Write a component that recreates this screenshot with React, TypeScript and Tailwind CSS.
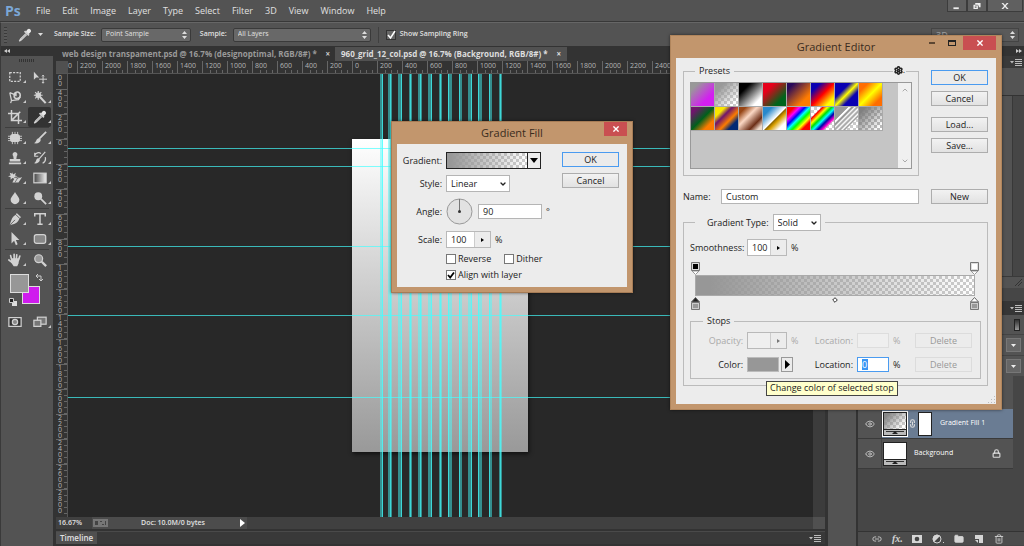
import type { ReactNode } from 'react';
import { clsx } from 'clsx';
import { ChevronDown, ChevronUp, Eye, Folder, Link2, Lock, Settings, Trash2 } from 'lucide-react';

const MENU = ['File', 'Edit', 'Image', 'Layer', 'Type', 'Select', 'Filter', '3D', 'View', 'Window', 'Help'];

const H_RULER = [
    2200, 2000, 1800, 1600, 1400, 1200, 1000, 800, 600, 400, 200, 0, 200, 400, 600, 800, 1000, 1200, 1400, 1600, 1800,
    2000, 2200, 2400,
];

const V_RULER = [400, 200, 0, 200, 400, 600, 800, 1000, 1200, 1400, 1600, 1800, 2000, 2200, 2400, 2600, 2800];

const H_GUIDES = [74, 92, 172, 241, 323];

// x and width of every guide pair, and where its bright line sits
const V_GUIDES = [
    [312, 3, 2], [320, 4, 2], [330, 4, 3], [341, 3, 1], [350, 4, 2], [360, 4, 3], [371, 3, 1],
    [380, 4, 0], [391, 3, 0], [400, 4, 3], [410, 4, 0], [421, 3, 0], [431, 3, 1],
];

const PRESETS = [
    'bg-[linear-gradient(135deg,#999_15%,#d31ff0_70%)]',
    'bg-[linear-gradient(135deg,#999_20%,#9990_85%),repeating-conic-gradient(#ccc_0_25%,#fff_0_50%)] bg-[length:100%_100%,6px_6px]',
    'bg-[linear-gradient(135deg,#000_25%,#fff_80%)]',
    'bg-[linear-gradient(135deg,#e6001a_25%,#00641b_75%)]',
    'bg-[linear-gradient(135deg,#29095a_15%,#ff7c00_75%)]',
    'bg-[linear-gradient(135deg,#0a00b2_20%,#f00_50%,#fffc00_82%)]',
    'bg-[linear-gradient(135deg,#0a00b2_32%,#fffc00_50%,#0a00b2_68%)]',
    'bg-[linear-gradient(135deg,#ff6e02_20%,#ff0_50%,#ff6d00_80%)]',
    'bg-[linear-gradient(135deg,#6f156c_15%,#00601b_50%,#fd7c00_78%)]',
    'bg-[linear-gradient(135deg,#f9e600_22%,#6f156c_38%,#fd7c00_60%,#002874_78%)]',
    'bg-[linear-gradient(135deg,#974616_15%,#fbd8c5_40%,#6c2e16_72%,#efdbcd_90%)]',
    'bg-[linear-gradient(135deg,#2989cc_20%,#fff_50%,#906a00_54%,#d99f00_62%,#fff_82%)]',
    'bg-[linear-gradient(135deg,#f00_16%,#f0f_28%,#00f_40%,#0ff_50%,#0f0_60%,#ff0_72%,#f00_82%)]',
    'bg-[linear-gradient(135deg,#f000_22%,#f00_26%,#ff0_36%,#0d0_45%,#0ff_54%,#00a_64%,#f0c_74%,#f000_80%),repeating-conic-gradient(#ccc_0_25%,#fff_0_50%)] bg-[length:100%_100%,6px_6px]',
    'bg-[linear-gradient(135deg,#999_28%,#fff_30%,#fff_34%,#999_36%,#999_40%,#fff_43%,#999_49%,#fff_54%,#999_60%,#fff_65%,#999_70%,#9990_74%),repeating-conic-gradient(#ccc_0_25%,#fff_0_50%)] bg-[length:100%_100%,6px_6px]',
    'bg-[linear-gradient(135deg,#808080_15%,#8080_90%),repeating-conic-gradient(#bbb_0_25%,#fff_0_50%)] bg-[length:100%_100%,6px_6px]',
];

function Tool({ name, active, plain, children }: { name: string; active?: boolean; plain?: boolean; children: ReactNode }) {
    return (
        <button
            aria-label={name}
            className={clsx('relative flex h-5 w-[23px] items-center justify-center rounded-xs', active && 'bg-[#333]')}
        >
            <svg viewBox="0 0 16 16" className="size-[14px] fill-none stroke-[#d2d2d2] stroke-[1.4]">{children}</svg>
            {!plain && (
                <svg viewBox="0 0 3 3" className="absolute right-0 bottom-1 size-[3px] fill-[#c8c8c8]"><path d="M3 0v3H0z" /></svg>
            )}
        </button>
    );
}

function ToolRow({ children }: { children: ReactNode }) {
    return <div className="flex gap-[2px] pl-[2px]">{children}</div>;
}

function ToolBox() {
    return (
        <aside className="flex w-[53px] shrink-0 flex-col border-l border-[#3a3a3a] bg-[#535353]">
            <div className="flex h-[10px] items-center bg-[#333] pl-[3px]">
                <svg viewBox="0 0 6 4" className="h-1 w-[6px] fill-[#ccc]"><path d="M3 0v4L0 2zM6 0v4L3 2z" /></svg>
            </div>
            <div className="mx-auto mt-[3px] mb-[5px] h-[3px] w-4 bg-[repeating-linear-gradient(90deg,#333_0_1px,#535353_1px_2px)]" />
            <ToolRow>
                <Tool name="Marquee"><rect x="2" y="3" width="12" height="10" strokeDasharray="2.4 1.4" /></Tool>
                <Tool name="Move" plain>
                    <path d="M1 2v9l2.500-2.500H7z" className="fill-[#d2d2d2] stroke-none" />
                    <path d="M11.500 6v9M7 10.500h9M10.300 7.200l1.200-1.300 1.200 1.300M10.300 13.800l1.200 1.300 1.200-1.300" strokeWidth="1.100" />
                </Tool>
            </ToolRow>
            <ToolRow>
                <Tool name="Lasso">
                    <path d="M2 3l2 9 8-1 2-3M2 3l5 2M4 12l-1 3" />
                    <path d="M7 7c0-6 7-6 7-1s-7 5-7 1M9 3v4" strokeWidth="1.800" />
                </Tool>
                <Tool name="Magic Wand">
                    <path d="M8 8l6.500 7" strokeWidth="2.400" />
                    <path d="M6 1v10M1 6h10M2.500 2.500l7 7M9.500 2.500l-7 7" />
                    <circle cx="6" cy="6" r="2.500" className="fill-[#d2d2d2]" />
                </Tool>
            </ToolRow>
            <ToolRow>
                <Tool name="Crop"><path d="M4 0v12h12M0 4h12v12M14 2L5 11" strokeWidth="1.700" /></Tool>
                <Tool name="Eyedropper" active><EyedropperPath /></Tool>
            </ToolRow>
            <div className="mx-1 border-t border-[#3e3e3e]" />
            <ToolRow>
                <Tool name="Healing Brush">
                    <rect x="3" y="4" width="10" height="8" rx="3" className="fill-[#d2d2d2]" />
                    <path d="M5 1v14M8 1v14M11 1v14M0 6h16M0 8.500h16M0 11h16" strokeWidth="1" />
                </Tool>
                <Tool name="Brush">
                    <path d="M15 1L7 9" strokeWidth="2" />
                    <path d="M7 8l2 2c-1 4-4 4.500-8 4 3-1 2-5 6-6z" className="fill-[#d2d2d2] stroke-none" />
                </Tool>
            </ToolRow>
            <ToolRow>
                <Tool name="Clone Stamp">
                    <path d="M8 1a3 3 0 0 1 2 5l-.500 3H14v3H2V9h4.500L6 6a3 3 0 0 1 2-5zM1 13h14v2H1z" className="fill-[#d2d2d2] stroke-none" />
                </Tool>
                <Tool name="History Brush">
                    <path d="M14 1L7 9M2 5c1-3 5-4 7-2M2 2v4h4M14 7c1 4-1 6-3 7" />
                    <path d="M6 8l2 2c-1 4-4 4.500-7 4 3-1 2-5 5-6z" className="fill-[#d2d2d2] stroke-none" />
                </Tool>
            </ToolRow>
            <ToolRow>
                <Tool name="Eraser">
                    <path d="M8 7h8l-4 6H5zM5 1l1 3 3-2-1 3 3 1-4 1 1 2-3-1-2 2V7L0 6l3-1-1-3 3 1z" className="fill-[#d2d2d2] stroke-none" />
                    <path d="M8 7l3 1-3 5M11 8l4-1" stroke="#535353" strokeWidth=".8" />
                </Tool>
                <Tool name="Gradient">
                    <defs>
                        <linearGradient id="toolGradient"><stop stopColor="#444" /><stop offset="1" stopColor="#eee" /></linearGradient>
                    </defs>
                    <rect x="1" y="2.500" width="14" height="11" fill="url(#toolGradient)" />
                </Tool>
            </ToolRow>
            <ToolRow>
                <Tool name="Blur"><path d="M8 1c2 4 5 6 5 9a5 5 0 0 1-10 0c0-3 3-5 5-9z" className="fill-[#d2d2d2] stroke-none" /></Tool>
                <Tool name="Dodge">
                    <circle cx="6" cy="6" r="4.500" className="fill-[#d2d2d2] stroke-none" />
                    <path d="M9 9l6 6" strokeWidth="2" />
                </Tool>
            </ToolRow>
            <div className="mx-1 border-t border-[#3e3e3e]" />
            <ToolRow>
                <Tool name="Pen">
                    <path d="M10 1l5 5-2 1c-1 4-3 6-11 8C4 8 5 5 9 3z" className="fill-[#d2d2d2] stroke-none" />
                    <path d="M2 15l6-6M9 3l4 4" stroke="#535353" strokeWidth="1" />
                </Tool>
                <Tool name="Type"><path d="M2 5V2h12v3M8 2v12M5 14h6" strokeWidth="1.700" /></Tool>
            </ToolRow>
            <ToolRow>
                <Tool name="Path Selection"><path d="M4 0v13l3-3 2 5 2-1-2-5h4z" className="fill-[#d2d2d2] stroke-none" /></Tool>
                <Tool name="Rounded Rectangle"><rect x="1.500" y="3" width="13" height="10" rx="2.500" className="fill-[#888]" /></Tool>
            </ToolRow>
            <div className="mx-1 border-t border-[#3e3e3e]" />
            <ToolRow>
                <Tool name="Hand">
                    <path d="M4 7L3 3M7 7V1.500M9.500 7l.500-5M12 8l1.500-4.500M5 11L1 8" strokeWidth="1.900" strokeLinecap="round" />
                    <path d="M4 6h9l-1 6-1.500 3H6.500L3 10z" className="fill-[#d2d2d2] stroke-none" />
                </Tool>
                <Tool name="Zoom" plain>
                    <circle cx="6.500" cy="6.500" r="4.500" className="fill-[#999]" />
                    <path d="M10 10l5 5" strokeWidth="2.600" />
                </Tool>
            </ToolRow>
            <div className="relative ml-2 mt-1 h-[38px] w-[34px]">
                <button aria-label="Background color" className="absolute top-3 left-[13px] size-[18px] border border-[#ddd] bg-[#cf1bee]" />
                <button aria-label="Foreground color" className="absolute top-0 left-[1px] size-[19px] border border-[#ddd] bg-[#979797]" />
                <svg viewBox="0 0 8 8" className="absolute top-0 right-0 size-2 fill-none stroke-[#ccc]"><path d="M3 0L1 2l2 2M1 2h5v5M4 5l2 2 2-2" /></svg>
                <svg viewBox="0 0 8 8" className="absolute top-6 left-0 size-2"><path d="M3 3h5v5H3z" fill="#ddd" /><path d="M.5.5h4v4h-4z" fill="#222" stroke="#ccc" /></svg>
            </div>
            <ToolRow>
                <Tool name="Quick Mask" plain>
                    <rect x="1" y="3" width="14" height="10" className="fill-[#333]" />
                    <circle cx="8" cy="8" r="3" className="fill-[#888]" />
                </Tool>
                <Tool name="Screen Mode">
                    <rect x="5" y="2.500" width="10" height="8" className="fill-[#777]" />
                    <rect x="1" y="6" width="8" height="7" className="fill-[#777]" />
                </Tool>
            </ToolRow>
        </aside>
    );
}

function EyedropperPath() {
    return (
        <>
            <path d="M11 1.500c2-2 5 1 3.500 3.200L12 7 9 4z" className="fill-[#e8e8e8] stroke-none" />
            <path d="M7.500 3.500l5 5" strokeWidth="2" />
            <path d="M9 6.500l-6 6L1.500 15 4 13.500l6-6" />
        </>
    );
}

function UpDown() {
    return (
        <svg viewBox="0 0 5 8" className="pointer-events-none absolute top-[3px] right-1 h-2 w-[5px] fill-[#ddd]">
            <path d="M2.500 0L5 3H0zM2.500 8L5 5H0z" />
        </svg>
    );
}

function MenuGlyph() {
    return (
        <svg viewBox="0 0 12 8" className="h-2 w-3 fill-[#bbb]">
            <path d="M0 3h4L2 5.500zM5 1h7v1H5zM5 3h7v1H5zM5 5h7v1H5zM5 7h7v1H5z" />
        </svg>
    );
}

function TopBars() {
    return (
        <>
            <header className="flex h-[22px] shrink-0 items-center border-b border-[#383838] text-[9px]">
                <span className="w-9 pl-[5px] text-[14px] font-bold text-[#7ba7d7]">Ps</span>
                <nav className="flex gap-3">
                    {MENU.map((m) => <button key={m}>{m}</button>)}
                </nav>
                <div className="ml-auto flex self-start pr-[1px]">
                    {['M1 6h6v2H1z', 'M3 1h6v5H7V4H3zM1 3h5v5H1zm1.500 2v1.500h2V5z', 'M1 1h2l2 2.500L7 1h2L6 4.500 9 8H7L5 5.500 3 8H1l3-3.500z'].map((d, i) => (
                        <button
                            key={d}
                            aria-label={['Minimize', 'Restore', 'Close'][i]}
                            className={clsx('flex h-3 items-center justify-center border border-t-0 border-[#3c3c3c] bg-[#606060]', i === 2 ? 'w-9' : 'w-5')}
                        >
                            <svg viewBox="0 0 10 9" className="h-2 w-[10px] fill-[#eee]" fillRule="evenodd"><path d={d} /></svg>
                        </button>
                    ))}
                </div>
            </header>
            <div className="flex h-6 shrink-0 items-center border-t border-l border-[#666] border-l-[#3a3a3a] text-[7px] font-semibold">
                <div className="ml-[3px] h-4 w-[3px] bg-[repeating-linear-gradient(#3a3a3a_0_1px,#5a5a5a_1px_3px)]" />
                <button aria-label="Current tool" className="ml-[11px] flex items-center gap-[6px]">
                    <svg viewBox="0 0 16 16" className="size-[14px] fill-none stroke-[#d2d2d2] stroke-[1.4]"><EyedropperPath /></svg>
                    <svg viewBox="0 0 5 3" className="h-[3px] w-[5px] fill-[#ddd]"><path d="M0 0h5L2.500 3z" /></svg>
                </button>
                <label htmlFor="size" className="ml-[11px]">Sample Size:</label>
                <div className="relative ml-[5px]">
                    <select id="size" className="h-[14px] w-[90px] appearance-none rounded-xs border border-[#3a3a3a] bg-[#686868] pl-1 font-medium">
                        <option>Point Sample</option>
                    </select>
                    <UpDown />
                </div>
                <label htmlFor="sample" className="ml-[9px]">Sample:</label>
                <div className="relative ml-[6px]">
                    <select id="sample" className="h-[14px] w-[138px] appearance-none rounded-xs border border-[#3a3a3a] bg-[#686868] pl-1 font-medium">
                        <option>All Layers</option>
                    </select>
                    <UpDown />
                </div>
                <div className="mx-[7px] h-4 border-l border-[#404040]" />
                <label className="flex items-center gap-1">
                    <span className="relative flex">
                        <input type="checkbox" defaultChecked className="size-[10px] appearance-none border border-[#333] bg-[#666]" />
                        <svg viewBox="0 0 10 10" className="pointer-events-none absolute inset-0 fill-none stroke-white stroke-[1.5]"><path d="M2 5l2.500 3L9 1" /></svg>
                    </span>
                    Show Sampling Ring
                </label>
                <div className="relative mr-[5px] ml-auto">
                    <select aria-label="Workspace" className="h-[14px] w-[88px] appearance-none border border-[#444] bg-[#5a5a5a] pl-1 text-[9px] leading-3 text-[#999]">
                        <option>3D</option>
                    </select>
                    <UpDown />
                </div>
            </div>
        </>
    );
}

function Canvas() {
    return (
        <div className="relative min-w-0 flex-1 overflow-hidden bg-[#282828]">
            <div className="absolute top-[65px] left-[284px] h-[313px] w-44 bg-linear-to-b from-white to-[#999] shadow-[1px_2px_4px_#111]" />
            <svg className="absolute inset-0 h-full w-full" shapeRendering="crispEdges">
                {H_GUIDES.map((y) => <rect key={y} x="0" y={y} width="100%" height="1" fill="#4ff" fillOpacity=".68" />)}
                {V_GUIDES.map(([x, w, bright]) => (
                    <g key={x} fill="#4ff">
                        <rect x={x} y="0" width={w} height="100%" fillOpacity=".48" />
                        <rect x={x + bright} y="0" width="1" height="100%" fillOpacity=".65" />
                    </g>
                ))}
            </svg>
        </div>
    );
}

function Workspace() {
    return (
        <main className="ml-[3px] flex min-w-0 flex-1 flex-col bg-[#333]">
            <div className="flex h-[15px] shrink-0 items-end text-[8px] leading-[14px] font-bold text-[#999]">
                <div className="flex h-[14px] w-[279px] shrink-0 items-center justify-between pr-[5px] pl-[6px] whitespace-nowrap">
                    web design transpament.psd @ 16.7% (designoptimal, RGB/8#) *
                    <button aria-label="Close tab" className="text-[#ccc]">×</button>
                </div>
                <div className="flex h-[14px] w-[232px] shrink-0 items-center justify-between bg-[#515151] px-[6px] whitespace-nowrap text-[#ddd]">
                    960_grid_12_col.psd @ 16.7% (Background, RGB/8#) *
                    <button aria-label="Close tab">×</button>
                </div>
            </div>
            <div className="flex h-[13px] shrink-0 overflow-hidden border-b border-[#555] bg-[#333] text-[7px] leading-[9px] text-[#b5b5b5]">
                <div className="w-3 shrink-0 bg-[#505050]" />
                <div className="w-[9px] shrink-0">0</div>
                {H_RULER.map((n, i) => (
                    <div key={i} className="flex w-[25px] shrink-0 flex-col border-l border-[#666] pl-[2px]">
                        {n}
                        <div className="mt-auto h-[3px] bg-[repeating-linear-gradient(90deg,#333_0_5px,#666_5px_6px)]" />
                    </div>
                ))}
            </div>
            <div className="flex min-h-0 flex-1">
                <div className="w-3 shrink-0 overflow-hidden border-r border-[#555] text-[7px] leading-[6px] text-[#b5b5b5]">
                    <div className="h-[15px] pt-[1px] pl-[2px]"><span className="block w-1 break-all">00</span></div>
                    {/* the narrow box breaks after every digit, so the number reads downwards */}
                    {V_RULER.map((n, i) => (
                        <div key={i} className="flex h-[25px] border-t border-[#666] pl-[2px]">
                            <span className="w-1 break-all">{n}</span>
                            <div className="ml-auto w-[3px] bg-[repeating-linear-gradient(#333_0_5px,#666_5px_6px)]" />
                        </div>
                    ))}
                </div>
                <Canvas />
                <div className="w-3 shrink-0 bg-[#3c3c3c]" />
            </div>
            <div className="flex h-3 shrink-0 items-center bg-[#404040] text-[7px] leading-3 font-semibold">
                <span className="w-9 pl-[2px]">16.67%</span>
                <div className="flex h-full w-[155px] items-center bg-[#4c4c4c] pr-[2px]">
                    <svg viewBox="0 0 15 8" className="mr-[33px] ml-[1px] h-2 w-[15px]">
                        <path d="M0 0h15v8H0z" fill="#777" />
                        <path d="M2 2h3v4H2zM7 2h2v1H7zM9 5h2v1H9zM12 2h1v4h-1z" fill="#444" />
                    </svg>
                    Doc: 10.0M/0 bytes
                    <svg viewBox="0 0 5 8" className="ml-auto h-2 w-[5px] fill-white"><path d="M0 0l5 4-5 4z" /></svg>
                </div>
                <div className="ml-auto h-full w-3 bg-[#505050]" />
            </div>
            <div className="mt-[2px] mb-[2px] flex h-[13px] shrink-0 items-center justify-between border-t border-[#4a4a4a] bg-[#393939] pr-1">
                <button className="h-full w-[41px] bg-[#505050] text-[8px] leading-3 font-semibold">Timeline</button>
                <MenuGlyph />
            </div>
        </main>
    );
}

function Thumb({ gradient }: { gradient?: boolean }) {
    return (
        <div className="flex h-6 w-6 flex-col border border-[#222] bg-[#bbb]">
            <div
                className={clsx(
                    'h-[17px] border-b border-[#222]',
                    gradient
                        ? 'bg-[linear-gradient(135deg,#888_15%,#8880_85%),repeating-conic-gradient(#ccc_0_25%,#fff_0_50%)] bg-[length:100%_100%,6px_6px]'
                        : 'bg-white',
                )}
            />
            <svg viewBox="0 0 22 5" className="h-[5px] w-full"><path d="M2 1.500h18" stroke="#333" /><path d="M11 1l3 3H8z" fill="#222" /></svg>
        </div>
    );
}

function DropButton({ label }: { label: string }) {
    return (
        <div className="flex h-[21px] items-center justify-end border-t border-[#444] pr-[3px]">
            <button aria-label={label} className="flex h-[14px] w-[15px] items-center justify-center border border-[#777] bg-[#666]">
                <svg viewBox="0 0 5 3" className="h-[3px] w-[5px] fill-[#eee]"><path d="M0 0h5L2.500 3z" /></svg>
            </button>
        </div>
    );
}

function RightPanels() {
    return (
        <aside className="flex w-[199px] shrink-0 bg-[#333]">
            <div className="mr-[2px] ml-[3px] flex w-7 flex-col bg-[#535353]"><div className="h-[10px] bg-[#333]" /></div>
            <div className="flex min-w-0 flex-1 flex-col bg-[#464646]">
                <div className="flex h-[10px] items-center justify-end bg-[#333] pr-[2px]">
                    <svg viewBox="0 0 6 4" className="h-1 w-[6px] fill-[#ccc]"><path d="M0 0v4l3-2zM3 0v4l3-2z" /></svg>
                </div>
                <div className="flex h-3 items-center justify-end bg-[#3a3a3a] pr-[2px]"><MenuGlyph /></div>
                <div className="h-7 border-b border-[#333] bg-[#535353]" />
                <div className="mr-[11px] h-[180px] border-r border-[#383838] bg-[#535353]" />
                <div className="flex h-3 items-end justify-end border-t border-[#3a3a3a] bg-[#535353] p-[2px]">
                    <svg viewBox="0 0 7 7" className="size-[7px] fill-none stroke-[#333]"><path d="M7 0L0 7M7 3L3 7" /></svg>
                </div>
                <div className="mt-[13px] flex h-[14px] shrink-0 items-center justify-end bg-[#363636] pr-[2px]"><MenuGlyph /></div>
                <div className="flex h-[19px] items-center justify-end bg-[#535353] pr-[4px]">
                    <span className="h-3 w-[6px] border border-[#222] bg-linear-to-b from-[#333] to-[#999]" />
                </div>
                <div className="bg-[#535353]"><DropButton label="Opacity" /><DropButton label="Fill" /></div>
                <div className="mr-[11px] h-[33px] bg-[#535353]" />
                <ul className="mr-[11px] text-[7px] font-medium text-white">
                    <li className="flex h-[30px] items-center border-b border-[#3a3a3a] bg-[#6a7c93]">
                        <div className="flex h-full w-6 items-center justify-center border-r border-[#444] bg-[#535353]"><Eye size={10} className="text-[#ccc]" /></div>
                        <div className="ml-[1px] flex items-center gap-[1px]">
                            <div className="outline outline-white"><Thumb gradient /></div>
                            <Link2 size={9} strokeWidth={3} className="rotate-90 text-[#ddd]" />
                            <div className="h-6 w-[14px] border border-[#222] bg-white" />
                        </div>
                        <span className="ml-2">Gradient Fill 1</span>
                    </li>
                    <li className="flex h-[30px] items-center border-b border-[#3a3a3a] bg-[#535353] pr-3">
                        <div className="flex h-full w-6 items-center justify-center border-r border-[#444]"><Eye size={10} className="text-[#ccc]" /></div>
                        <div className="ml-[1px]"><Thumb /></div>
                        <span className="ml-[7px]">Background</span>
                        <Lock size={9} strokeWidth={3} className="ml-auto text-[#ddd]" />
                    </li>
                </ul>
                <div className="mt-auto mb-[1px] flex h-[14px] shrink-0 items-center gap-[10px] border-t border-[#333] bg-[#4c4c4c] pl-[14px] text-[#d5d5d5]">
                    <Link2 size={10} />
                    <span className="w-[10px] font-['Liberation_Serif',serif] text-[10px] leading-3 font-bold italic">fx.</span>
                    <svg viewBox="0 0 10 10" className="size-[10px]"><path d="M0 1h10v8H0z" fill="#d5d5d5" /><circle cx="5" cy="5" r="2.300" fill="#444" /></svg>
                    <svg viewBox="0 0 12 10" className="h-[10px] w-3"><circle cx="5" cy="5" r="4" fill="#444" stroke="#d5d5d5" /><path d="M2 8A4 4 0 0 1 8 2zM11 8h1v1h-1z" fill="#d5d5d5" /></svg>
                    <Folder size={10} fill="currentColor" />
                    <svg viewBox="0 0 10 10" className="size-[10px] fill-[#d5d5d5]"><path d="M1 1h8v8H5V5H1z" /><path d="M1 6l3 3V6z" /></svg>
                    <Trash2 size={10} />
                </div>
            </div>
        </aside>
    );
}

function DialogButton({ children, primary, disabled, className }: { children: ReactNode; primary?: boolean; disabled?: boolean; className?: string }) {
    return (
        <button
            disabled={disabled}
            className={clsx(
                'flex h-[15px] w-[57px] shrink-0 items-center justify-center border',
                primary && 'border-[#4a9bf0] bg-[#ebebeb]',
                disabled && 'border-[#dcdcdc] text-[#999]',
                !primary && !disabled && 'border-[#adadad] bg-linear-to-b from-[#f2f2f2] to-[#e2e2e2]',
                className,
            )}
        >
            {children}
        </button>
    );
}

// text box with a small slider arrow at its right
function Stepper({ id, value, narrow, disabled }: { id: string; value: string; narrow?: boolean; disabled?: boolean }) {
    return (
        <div className={clsx('flex h-[17px] shrink-0 border border-[#b9b9b9]', narrow ? 'w-[40px]' : 'w-[45px]')}>
            <input id={id} defaultValue={value} disabled={disabled} className={clsx('min-w-0 flex-1 pl-1', disabled ? 'bg-[#efefef]' : 'bg-white')} />
            <button aria-label="Open slider" disabled={disabled} className="flex w-4 items-center justify-center border-l border-[#ccc] bg-[#ececec]">
                <svg viewBox="0 0 3 4" className={clsx('h-1 w-[3px]', disabled ? 'fill-[#777]' : 'fill-black')}><path d="M0 0l3 2-3 2z" /></svg>
            </button>
        </div>
    );
}

function Dropdown({ id, value, className }: { id: string; value: string; className: string }) {
    return (
        <div className="relative shrink-0">
            <select id={id} className={clsx('block h-[17px] appearance-none border border-[#b5b5b5] bg-white pl-1', className)}>
                <option>{value}</option>
            </select>
            <ChevronDown size={8} strokeWidth={4} className="pointer-events-none absolute top-[5px] right-[3px]" />
        </div>
    );
}

function Check({ label, checked }: { label: string; checked?: boolean }) {
    return (
        <label className="flex h-[10px] items-center gap-[2px]">
            <span className="relative flex">
                <input type="checkbox" defaultChecked={checked} className="size-[10px] appearance-none border border-[#777] bg-white" />
                {checked && (
                    <svg viewBox="0 0 10 10" className="pointer-events-none absolute inset-0 fill-none stroke-black stroke-[1.8]"><path d="M2 5l2.200 2.500L8 2.500" /></svg>
                )}
            </span>
            {label}
        </label>
    );
}

function CloseButton({ className }: { className: string }) {
    return (
        <button aria-label="Close" className={clsx('flex h-[14px] items-center justify-center bg-[#c94f51]', className)}>
            <svg viewBox="0 0 7 7" className="size-[6px] stroke-white stroke-[1.6]"><path d="M.5.5l6 6M6.500.5l-6 6" /></svg>
        </button>
    );
}

function GradientFillDialog() {
    return (
        <section className="absolute top-[121px] left-[391px] w-[242px] border border-[#a67c56] bg-[#c2966d] px-[5px] pb-[5px] text-[9px] leading-3 text-[#222] shadow-[0_0_3px_#0008]">
            <div className="relative flex h-[22px] items-center justify-center">
                <h2 className="text-[11px] text-[#3a2c20]">Gradient Fill</h2>
                <CloseButton className="absolute top-0 right-0 w-[23px]" />
            </div>
            <div className="flex justify-between bg-[#ececec] pt-2 pr-2 pb-[7px]">
                <div className="flex flex-col gap-[6px]">
                    <div className="flex items-center gap-1">
                        <span className="w-[45px] text-right">Gradient:</span>
                        <button aria-label="Edit gradient" className="flex h-[17px] w-[95px] border border-[#222]">
                            <span className="h-full flex-1 bg-[linear-gradient(90deg,#989898_5%,#9990),repeating-conic-gradient(#ccc_0_25%,#fff_0_50%)] bg-[length:100%_100%,6px_6px]" />
                            <span className="flex h-full w-[13px] items-center justify-center border-l border-[#222]">
                                <svg viewBox="0 0 8 5" className="h-[5px] w-2 fill-black"><path d="M0 0h8L4 5z" /></svg>
                            </span>
                        </button>
                    </div>
                    <div className="flex items-center gap-1">
                        <label htmlFor="style" className="w-[45px] text-right">Style:</label>
                        <Dropdown id="style" value="Linear" className="w-[64px]" />
                    </div>
                    <div className="flex items-center gap-1">
                        <label htmlFor="angle" className="w-[45px] text-right">Angle:</label>
                        <svg viewBox="0 0 27 27" className="mr-[1px] size-[27px]">
                            <circle cx="13.500" cy="13.500" r="12.500" fill="#e2e2e2" stroke="#999" />
                            <path d="M13.500 13.500V1" stroke="#777" /><circle cx="13.500" cy="13.500" r="1.500" fill="#333" />
                        </svg>
                        <input id="angle" defaultValue="90" className="h-[15px] w-16 border border-[#b5b5b5] bg-white pl-1" />
                        <span>°</span>
                    </div>
                    <div className="flex items-center gap-1">
                        <label htmlFor="scale" className="w-[45px] text-right">Scale:</label>
                        <Stepper id="scale" value="100" />
                        <span>%</span>
                    </div>
                    <div className="flex gap-[13px] pl-[49px]"><Check label="Reverse" /><Check label="Dither" /></div>
                    <div className="pl-[49px]"><Check label="Align with layer" checked /></div>
                </div>
                <div className="flex flex-col gap-[6px]">
                    <DialogButton primary>OK</DialogButton>
                    <DialogButton>Cancel</DialogButton>
                </div>
            </div>
        </section>
    );
}

function StopHandle({ fill, up, selected }: { fill: string; up?: boolean; selected?: boolean }) {
    return up ? (
        <svg viewBox="0 0 9 13" className="h-[13px] w-[9px]">
            <path d="M.5 5L4.500.5 8.500 5z" fill={selected ? '#222' : '#fff'} stroke="#666" />
            <path d="M.5 5.500h8v7h-8z" fill="#ccc" stroke="#777" /><path d="M2 7h5v4H2z" fill={fill} />
        </svg>
    ) : (
        <svg viewBox="0 0 9 13" className="h-[13px] w-[9px]">
            <path d="M1 9h7l-3.500 3.500z" fill="#fff" stroke="#999" />
            <path d="M.5.5h8v8h-8z" fill="#ddd" stroke="#777" /><path d="M2 2h5v5H2z" fill={fill} />
        </svg>
    );
}

function GradientEditorDialog() {
    return (
        <section className="absolute top-[35px] left-[670px] w-[332px] border border-[#b0855c] bg-[#c2966d] px-[5px] pb-[5px] text-[9px] leading-3 text-[#222] shadow-[0_0_3px_#0008]">
            <div className="relative flex h-[22px] items-center justify-center">
                <h2 className="text-[11px] text-[#3a2c20]">Gradient Editor</h2>
                <div className="absolute top-0 right-0 flex items-center">
                    <button aria-label="Minimize" className="mr-[13px] h-[2px] w-[6px] bg-[#5c4632]" />
                    <button aria-label="Maximize" className="mr-[7px] h-[6px] w-2 border border-t-2 border-[#222]" />
                    <CloseButton className="w-[33px]" />
                </div>
            </div>
            <div className="relative bg-[#ececec] pt-[7px] pr-2 pb-[18px] pl-[7px]">
                <div className="flex gap-3">
                    <fieldset className="relative min-w-0 flex-1 border border-[#bbb] px-[6px] pb-[6px]">
                        <legend className="ml-[5px] px-1">Presets</legend>
                        <button aria-label="Preset options" className="absolute -top-[13px] right-3 flex items-center bg-[#ececec] px-[1px]">
                            <Settings size={9} strokeWidth={4} />.
                        </button>
                        <div className="mt-[5px] flex h-[87px] border border-[#999] bg-[#c5c5c5]">
                            <div className="grid grid-cols-8 content-start">
                                {PRESETS.map((p, i) => (
                                    <button key={p} aria-label={`Preset ${i + 1}`} className={clsx('size-6 border-r border-b border-[#aaa]', p)} />
                                ))}
                            </div>
                            <div className="ml-auto flex w-[13px] flex-col items-center justify-between bg-[#f0f0f0] py-[3px] text-[#aaa]">
                                <ChevronUp size={8} strokeWidth={3} />
                                <ChevronDown size={8} strokeWidth={3} />
                            </div>
                        </div>
                    </fieldset>
                    <div className="flex flex-col gap-[6px] pt-[5px]">
                        <DialogButton primary>OK</DialogButton>
                        <DialogButton className="mb-[5px]">Cancel</DialogButton>
                        <DialogButton>Load...</DialogButton>
                        <DialogButton>Save...</DialogButton>
                    </div>
                </div>
                <div className="mt-[13px] flex items-center">
                    <label htmlFor="name" className="w-[38px]">Name:</label>
                    <input id="name" defaultValue="Custom" className="mr-3 h-[15px] min-w-0 flex-1 border border-[#b5b5b5] bg-white pl-1" />
                    <DialogButton>New</DialogButton>
                </div>
                <fieldset className="mt-[10px] min-w-0 border border-[#bbb] px-[6px] pb-[6px]">
                    <legend className="ml-[5px] flex items-center gap-1 pr-1 pl-3">
                        <label htmlFor="type">Gradient Type:</label>
                        <Dropdown id="type" value="Solid" className="w-12" />
                    </legend>
                    <div className="mt-2 flex items-center gap-1">
                        <label htmlFor="smooth" className="w-[53px] text-right">Smoothness:</label>
                        <Stepper id="smooth" value="100" narrow />
                        <span>%</span>
                    </div>
                    <div className="mt-[6px] flex justify-between pr-[2px] pl-[1px]"><StopHandle fill="#000" /><StopHandle fill="#fff" /></div>
                    <div className="mr-[6px] ml-[5px] h-[21px] border border-[#aaa] bg-[linear-gradient(90deg,#979797_5%,#9990),repeating-conic-gradient(#ccc_0_25%,#fff_0_50%)] bg-[length:100%_100%,6px_6px]" />
                    <div className="mt-[1px] flex justify-between pr-[2px] pl-[1px]">
                        <StopHandle fill="#999" up selected />
                        <svg viewBox="0 0 6 6" className="size-[6px] fill-white stroke-[#333]"><path d="M3 .7L5.300 3 3 5.300.7 3z" /></svg>
                        <StopHandle fill="#999" up />
                    </div>
                    <fieldset className="mt-[5px] min-w-0 border border-[#bbb] pr-2 pb-[6px]">
                        <legend className="ml-3 px-1">Stops</legend>
                        <div className="mt-[5px] flex items-center gap-1 text-[#aaa]">
                            <label htmlFor="opacity" className="w-[52px] text-right">Opacity:</label>
                            <Stepper id="opacity" value="" narrow disabled />
                            <span className="w-[10px]">%</span>
                            <label htmlFor="opacityLocation" className="w-12 text-right">Location:</label>
                            <input id="opacityLocation" disabled className="h-[15px] w-8 border border-[#ddd] bg-[#efefef]" />
                            <span>%</span>
                            <DialogButton disabled className="ml-auto">Delete</DialogButton>
                        </div>
                        <div className="mt-2 flex items-center gap-1">
                            <span className="w-[52px] text-right">Color:</span>
                            <div className="flex w-[46px] items-center gap-[2px]">
                                <button aria-label="Stop color" className="h-[15px] w-8 shrink-0 border border-[#bbb] bg-[#979797]" />
                                <button aria-label="Stop color source" className="flex h-[15px] w-3 shrink-0 items-center justify-center border border-[#999]">
                                    <svg viewBox="0 0 5 9" className="h-[9px] w-[5px] fill-black"><path d="M0 0l5 4.500L0 9z" /></svg>
                                </button>
                            </div>
                            <label htmlFor="colorLocation" className="w-14 text-right">Location:</label>
                            <div className="flex h-[15px] w-8 items-center border border-[#4a9bf0] bg-white pl-1">
                                <input id="colorLocation" defaultValue="0" className="h-[11px] w-[6px] bg-[#3a96f4] text-white" />
                            </div>
                            <span>%</span>
                            <DialogButton disabled className="ml-auto">Delete</DialogButton>
                        </div>
                    </fieldset>
                </fieldset>
                <div role="tooltip" className="absolute bottom-2 left-[90px] h-[15px] w-[132px] border border-[#444] bg-[#ffffcb] pl-[3px] whitespace-nowrap">
                    Change color of selected stop
                </div>
                <svg viewBox="0 0 8 8" className="absolute right-0 bottom-0 size-2 fill-[#bbb]">
                    <path d="M6 0h1v1H6zM6 3h1v1H6zM6 6h1v1H6zM3 3h1v1H3zM3 6h1v1H3zM0 6h1v1H0z" />
                </svg>
            </div>
        </section>
    );
}

export default function App() {
    return (
        <div className="relative flex h-screen flex-col overflow-hidden bg-[#535353] font-['Open_Sans',sans-serif] text-[#e0e0e0]">
            <TopBars />
            <div className="flex min-h-0 flex-1 bg-[#333]">
                <ToolBox />
                <Workspace />
                <RightPanels />
            </div>
            <GradientFillDialog />
            <GradientEditorDialog />
        </div>
    );
}
